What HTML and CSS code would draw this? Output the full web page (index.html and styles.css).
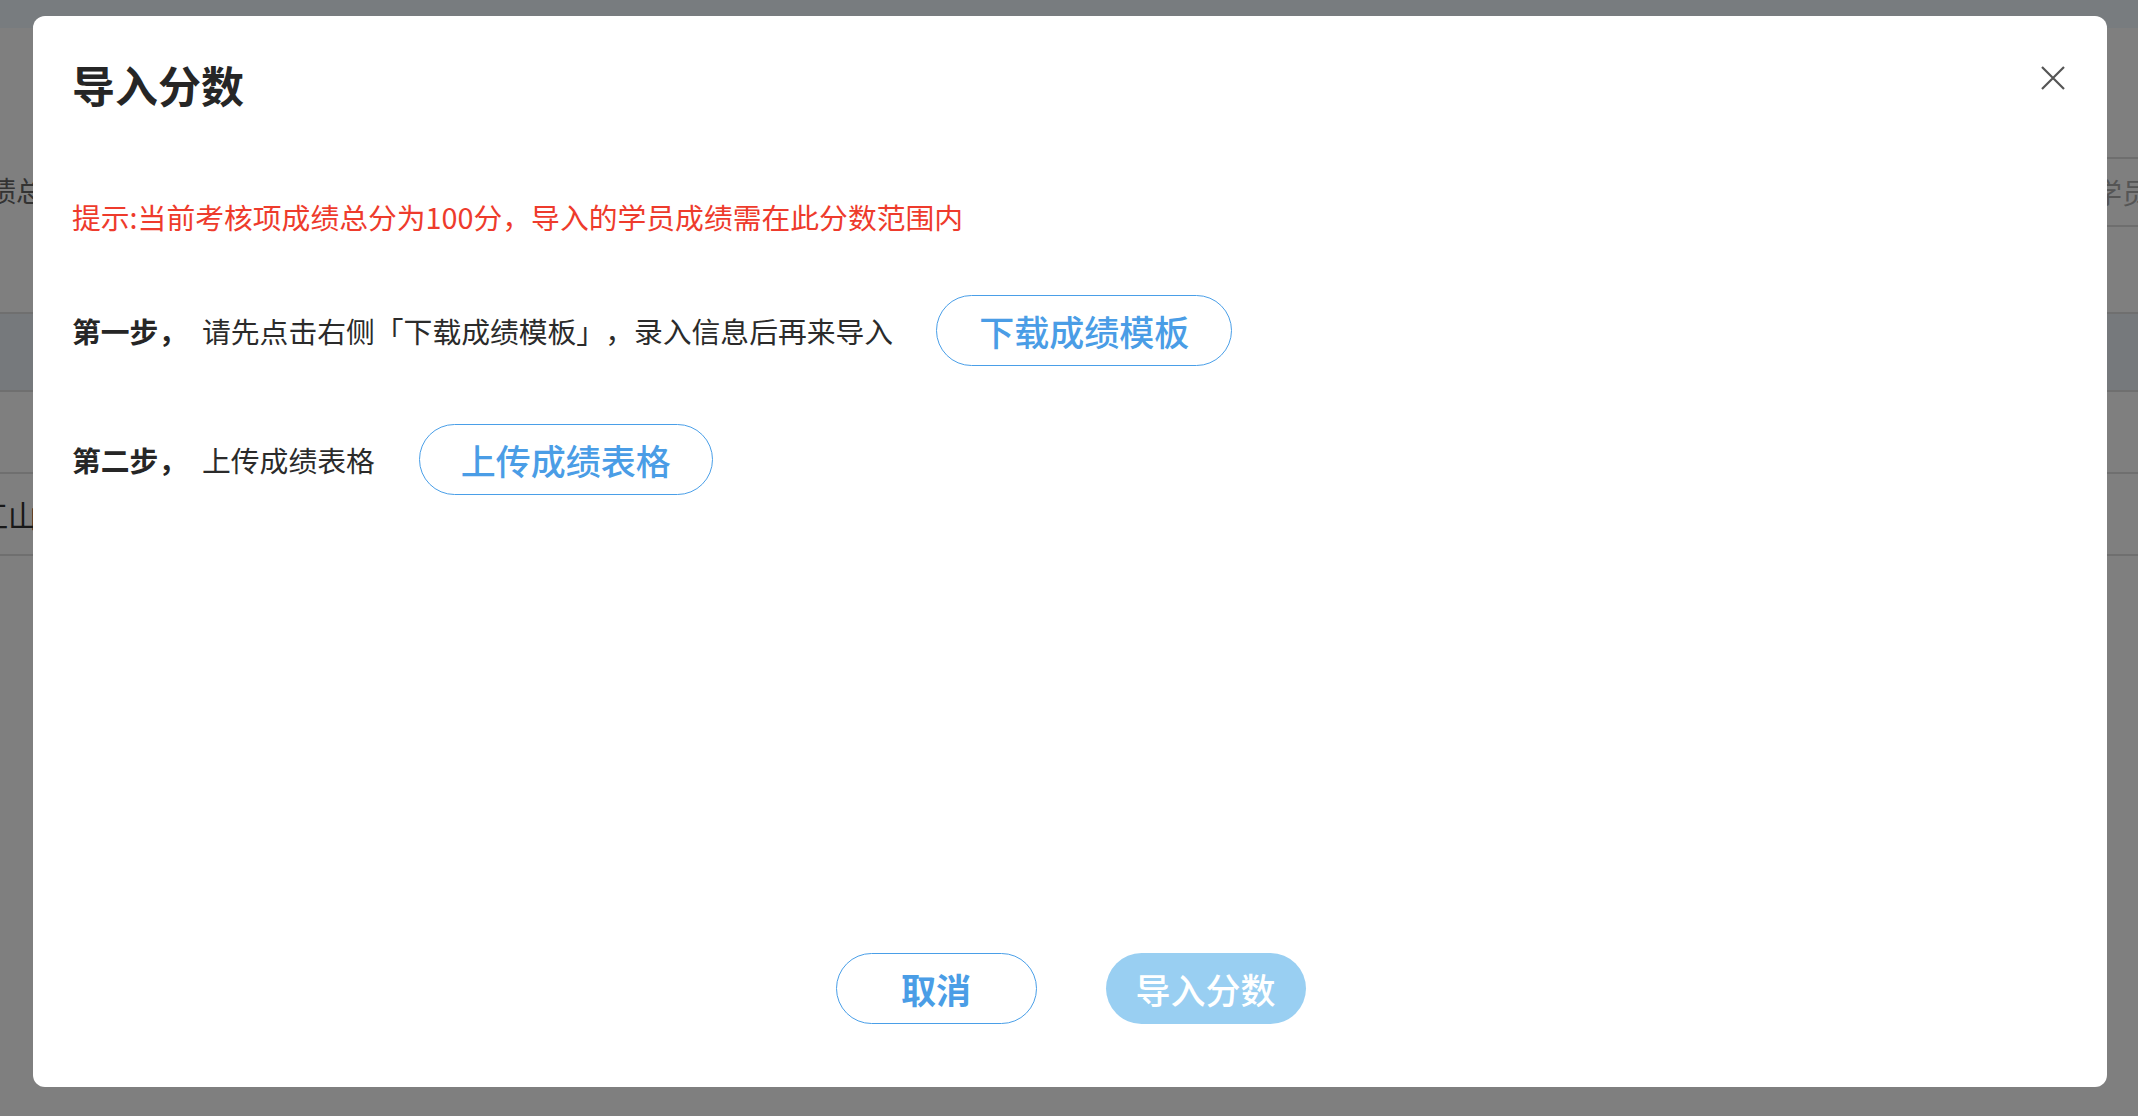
FILE: index.html
```html
<!DOCTYPE html>
<html lang="zh-CN">
<head>
<meta charset="utf-8">
<title>导入分数</title>
<link rel="stylesheet" href="styles.css">
</head>
<body>
<div class="page">
  <div class="topbar"></div>
  <div class="toolbar">
    <span class="col-head">成绩总分</span>
    <span class="tool-btn">导入学员</span>
  </div>
  <div class="table">
    <div class="row row-hl"></div>
    <div class="row"></div>
    <div class="row"><span class="cell-name">江山</span></div>
  </div>
</div>
<div class="mask"></div>
<div class="modal">
  <button class="close" aria-label="关闭">
    <svg width="24" height="24" viewBox="0 0 24 24"><path d="M1 1 L23 23 M23 1 L1 23" stroke="#555" stroke-width="2.2" fill="none"/></svg>
  </button>
  <h1 class="title">导入分数</h1>
  <p class="hint">提示:当前考核项成绩总分为100分，导入的学员成绩需在此分数范围内</p>
  <div class="step">
    <span class="step-label">第一步，</span>
    <span class="step-text">请先点击右侧「下载成绩模板」，录入信息后再来导入</span>
    <button class="btn-outline btn-step">下载成绩模板</button>
  </div>
  <div class="step">
    <span class="step-label">第二步，</span>
    <span class="step-text">上传成绩表格</span>
    <button class="btn-outline btn-step btn-step2">上传成绩表格</button>
  </div>
  <div class="footer">
    <button class="btn-outline btn-cancel">取消</button>
    <button class="btn-primary">导入分数</button>
  </div>
</div>
</body>
</html>
```
FILE: styles.css
```css
html, body {
  margin: 0;
  padding: 0;
}
body {
  width: 2138px;
  height: 1116px;
  overflow: hidden;
  position: relative;
  background: #ffffff;
  font-family: "Noto Sans CJK SC", "Noto Sans", sans-serif;
  text-spacing-trim: space-all;
}
.page {
  width: 2138px;
  height: 1116px;
  display: flex;
  flex-direction: column;
}
.topbar {
  height: 28px;
  background: #f0f8ff;
}
.toolbar {
  margin-top: 129px;
  height: 70px;
  display: flex;
  align-items: center;
  justify-content: space-between;
}
.col-head {
  margin-left: -40px;
  margin-top: -4px;
  font-size: 28px;
  color: #666666;
}
.tool-btn {
  box-sizing: border-box;
  height: 70px;
  width: 200px;
  margin-right: -78px;
  border: 2px solid #dcdcdc;
  border-radius: 8px;
  display: flex;
  align-items: center;
  padding-left: 20px;
  font-size: 28px;
  color: #aaaaaa;
  white-space: nowrap;
}
.table {
  margin-top: 85px;
  border-top: 2px solid #dedede;
}
.row {
  height: 80px;
  border-bottom: 2px solid #dedede;
  display: flex;
  align-items: center;
}
.row-hl {
  height: 76px;
  background: #ecf2f8;
}
.cell-name {
  margin-left: -22px;
  font-size: 30px;
  color: #333;
}
.mask {
  position: absolute;
  inset: 0;
  background: rgba(0, 0, 0, 0.5);
}
.modal {
  position: absolute;
  left: 33px;
  top: 16px;
  width: 2074px;
  height: 1071px;
  box-sizing: border-box;
  background: #ffffff;
  border-radius: 12px;
  padding: 38px 38px 63px 39px;
  display: flex;
  flex-direction: column;
  color: #2b2b2b;
}
.close {
  position: absolute;
  right: 42px;
  top: 50px;
  width: 24px;
  height: 24px;
  padding: 0;
  border: none;
  background: none;
  display: block;
}
.close svg {
  display: block;
}
.title {
  margin: 0;
  font-size: 43px;
  line-height: 60px;
  font-weight: 700;
  color: #262626;
}
.hint {
  margin: 83px 0 0 0;
  font-size: 28.8px;
  line-height: 40px;
  color: #ee3b2c;
}
.step {
  margin-top: 58px;
  display: flex;
  align-items: center;
  height: 71px;
  font-size: 28.8px;
}
.step-label {
  font-weight: 700;
  color: #262626;
  width: 130px;
}
.step-text {
  color: #2b2b2b;
}
.btn-outline {
  box-sizing: border-box;
  height: 71px;
  border: 1.5px solid #4a9fe8;
  border-radius: 36px;
  background: #ffffff;
  color: #4a9de6;
  font-family: "Noto Sans CJK SC", "Noto Sans", sans-serif;
  font-size: 35px;
  font-weight: 500;
  padding: 0;
  display: flex;
  align-items: center;
  justify-content: center;
}
.btn-step {
  width: 296px;
  margin-left: 43px;
}
.btn-step2 {
  width: 294px;
  margin-left: 44px;
}
.footer {
  margin-top: auto;
  display: flex;
  justify-content: center;
  gap: 69px;
}
.btn-cancel {
  width: 201px;
  font-weight: 700;
}
.btn-primary {
  box-sizing: border-box;
  width: 200px;
  height: 71px;
  border: none;
  border-radius: 36px;
  background: #99cff2;
  color: #ffffff;
  font-family: "Noto Sans CJK SC", "Noto Sans", sans-serif;
  font-size: 35px;
  font-weight: 500;
  padding: 0;
  display: flex;
  align-items: center;
  justify-content: center;
}
```
